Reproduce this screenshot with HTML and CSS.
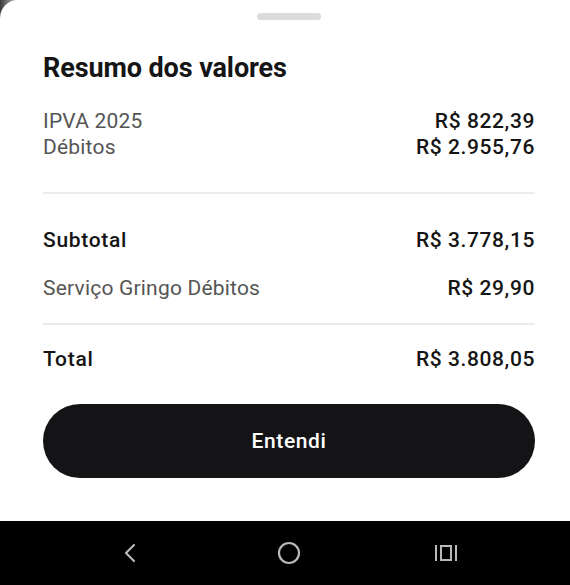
FILE: index.html
```html
<!DOCTYPE html>
<html lang="pt-BR">
<head>
  <meta charset="UTF-8" />
  <meta name="viewport" content="width=device-width, initial-scale=1.0"/>
  <title>Resumo dos valores</title>
  <link rel="stylesheet" href="styles.css">
</head>
<body>

  <!-- Bottom sheet -->
  <div class="sheet">
    <div class="handle"></div>

    <h2 class="title">Resumo dos valores</h2>

    <div class="group">
      <div class="row">
        <span class="label">IPVA 2025</span>
        <span class="value">R$ 822,39</span>
      </div>
      <div class="row">
        <span class="label">Débitos</span>
        <span class="value">R$ 2.955,76</span>
      </div>
    </div>

    <hr class="divider divider-top">

    <div class="row row-sub">
      <span class="label strong">Subtotal</span>
      <span class="value">R$ 3.778,15</span>
    </div>
    <div class="row row-fee">
      <span class="label">Serviço Gringo Débitos</span>
      <span class="value">R$ 29,90</span>
    </div>

    <hr class="divider divider-bottom">

    <div class="row row-total">
      <span class="label strong">Total</span>
      <span class="value">R$ 3.808,05</span>
    </div>

    <button class="btn">Entendi</button>
  </div>

  <!-- Android nav bar -->
  <div class="navbar">
    <svg class="nav-back" width="14" height="20" viewBox="0 0 14 20">
      <path d="M11 2 L3 10 L11 18" fill="none" stroke="#b9b9b9" stroke-width="2.2" stroke-linecap="round" stroke-linejoin="round"/>
    </svg>
    <svg class="nav-home" width="24" height="24" viewBox="0 0 24 24">
      <circle cx="12" cy="12" r="10" fill="none" stroke="#b9b9b9" stroke-width="2.2"/>
    </svg>
    <svg class="nav-recents" width="24" height="18" viewBox="0 0 24 18">
      <rect x="1" y="1" width="2" height="16" fill="#b9b9b9"/>
      <rect x="7" y="2" width="10" height="14" fill="none" stroke="#b9b9b9" stroke-width="2"/>
      <rect x="21" y="1" width="2" height="16" fill="#b9b9b9"/>
    </svg>
  </div>

</body>
</html>
```

FILE: styles.css
```css
body {
  font-family: Roboto, "Liberation Sans", sans-serif;
  background: linear-gradient(90deg, #3a3a3a, #fff 24px);
  margin: 0;
  padding: 0;
  height: 585px;
  display: flex;
  flex-direction: column;
}
.sheet {
  flex: 1;
  background: white;
  border-top-left-radius: 18px;
  padding: 13px 35px 0 43px;
  display: flex;
  flex-direction: column;
}
.handle {
  width: 64px;
  height: 7px;
  border-radius: 4px;
  background: #dcdcdc;
  margin: 0 auto;
}
.title {
  margin: 32px 0 24px;
  font-size: 27px;
  line-height: 32px;
  font-weight: 700;
  color: #151515;
  letter-spacing: -0.1px;
}
.row {
  display: flex;
  justify-content: space-between;
  font-size: 21px;
  line-height: 26px;
}
.label {
  color: #555;
  letter-spacing: 0.2px;
}
.label.strong {
  color: #151515;
  font-weight: 500;
  letter-spacing: 0.7px;
}
.value {
  color: #151515;
  font-weight: 500;
  letter-spacing: 0.6px;
}
.divider {
  border: none;
  height: 2px;
  background: #ececec;
  margin: 0;
}
.divider-top {
  margin-top: 32px;
}
.row-sub {
  margin-top: 33px;
}
.row-fee {
  margin-top: 22px;
}
.divider-bottom {
  margin-top: 22px;
}
.row-total {
  margin-top: 21px;
}
.btn {
  margin-top: 32px;
  height: 74px;
  border: none;
  border-radius: 37px;
  background: #141416;
  color: white;
  font-family: Roboto, sans-serif;
  font-size: 21px;
  font-weight: 500;
  letter-spacing: 0.6px;
  cursor: pointer;
}
.navbar {
  height: 64px;
  background: #000;
  display: flex;
  align-items: center;
}
.nav-back {
  margin-left: 123px;
}
.nav-home {
  margin-left: 140px;
}
.nav-recents {
  margin-left: 133px;
}
```
